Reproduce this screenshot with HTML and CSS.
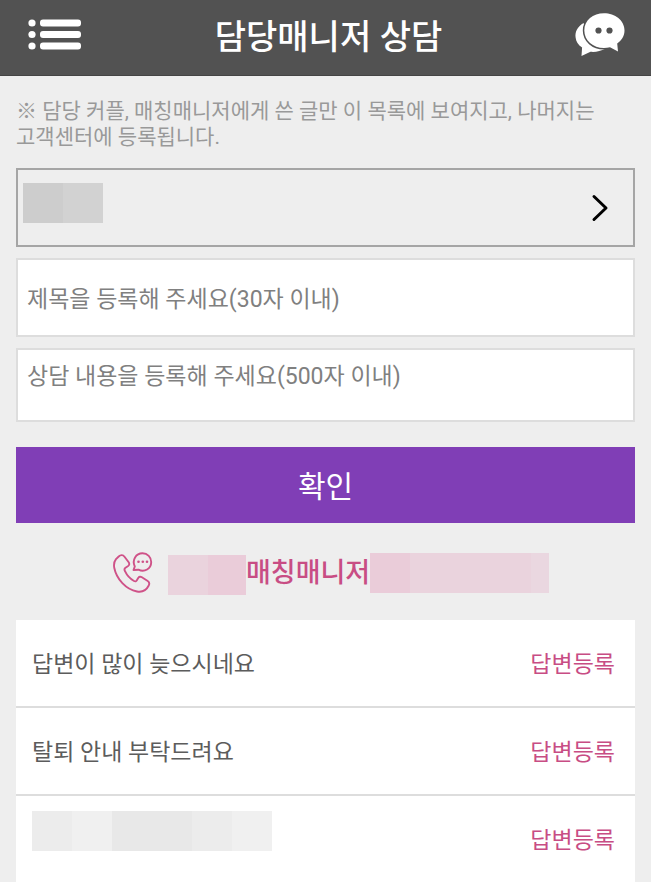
FILE: index.html
```html
<!DOCTYPE html>
<html lang="ko">
<head>
    <meta charset="UTF-8">
    <meta name="viewport" content="width=device-width, initial-scale=1.0">
    <title>담당매니저 상담</title>
    <link rel="stylesheet" href="styles.css">
</head>
<body>
    <header class="header">
        <button type="button" class="icon-button" aria-label="메뉴">
            <svg width="54" height="32" viewBox="0 0 54 32" fill="#fff">
                <circle cx="4" cy="4" r="3.6"/>
                <circle cx="4" cy="15.500" r="3.6"/>
                <circle cx="4" cy="27" r="3.6"/>
                <rect x="12" y="0.500" width="41" height="7" rx="3"/>
                <rect x="12" y="12" width="41" height="7" rx="3"/>
                <rect x="12" y="23.500" width="41" height="7" rx="3"/>
            </svg>
        </button>
        <h1 class="title">담당매니저 상담</h1>
        <button type="button" class="icon-button" aria-label="대화">
            <svg width="50" height="44" viewBox="0 0 50 44">
                <path fill="#fff" d="M8.500 10C2 14 0 19 .6 24.500c.5 4 2.400 7.500 6.500 10L6.500 43l9-4.200c5 .5 10-.5 15-3L20 34z"/>
                <path fill="#fff" stroke="#525252" stroke-width="3" paint-order="stroke" d="M29 .3C18 .3 9.300 7.500 9.300 17.500S18 35 29 35c2 0 4-.3 6-.8l8 4.300-.8-8C46.500 27.500 49.500 23 49.500 17.500 49.500 7.500 40 .3 29 .3z"/>
                <circle cx="23.500" cy="17.500" r="3.100" fill="#525252"/>
                <circle cx="34.500" cy="17.500" r="3.100" fill="#525252"/>
            </svg>
        </button>
    </header>

    <main class="content">
        <p class="notice">※ 담당 커플, 매칭매니저에게 쓴 글만 이 목록에 보여지고, 나머지는 고객센터에 등록됩니다.</p>

        <form class="form">
            <button type="button" class="picker" aria-label="담당자 선택">
                <span class="mask">
                    <span class="block gray-1"></span>
                    <span class="block gray-2"></span>
                </span>
                <svg width="18" height="28" viewBox="0 0 18 28" fill="none" stroke="#000" stroke-width="3" stroke-linecap="round" stroke-linejoin="round">
                    <path d="M3 2.500l12 11.500L3 25.500"/>
                </svg>
            </button>
            <input type="text" class="field" maxlength="30" aria-label="제목" placeholder="제목을 등록해 주세요(30자 이내)">
            <textarea class="field message" maxlength="500" aria-label="상담 내용" placeholder="상담 내용을 등록해 주세요(500자 이내)"></textarea>
            <button type="submit" class="submit">확인</button>
        </form>

        <div class="manager">
            <svg class="phone" width="40" height="42" viewBox="0 0 40 42" fill="none" stroke="#cf5288" stroke-width="1.900" stroke-linecap="round" stroke-linejoin="round">
                <path d="M3 7.200l2.700-2.700c2-2 4.300-1.800 5.800.2l4 5.300c1.200 1.700 1 3-.7 4.200l-2.300 1.500c-1.200.8-1.300 2-.5 3.500 2 4.300 5 7.600 9 9.800 1.300.7 2.300.4 3-.9l1.200-2c.9-1.500 2.200-1.700 3.700-.8l5.800 3.700c1.800 1.200 2 2.800.9 4.800-2.300 4.500-6.600 6.600-11.600 5.700C13 37.500 3.500 27 1.300 16 .6 12.500 1.200 9.500 3 7.200z"/>
                <path d="M21.800 14.500C18.700 7.800 23 1.300 29.500 1.300c5 0 8.700 3.800 8.700 8.700 0 6.800-6.700 10.700-12.700 7.700l-5 .3z"/>
                <g fill="#cf5288" stroke="none">
                    <circle cx="25.500" cy="9.800" r="1.300"/>
                    <circle cx="29.800" cy="9.800" r="1.300"/>
                    <circle cx="34" cy="9.800" r="1.300"/>
                </g>
            </svg>
            <span class="mask low">
                <span class="block pink-2"></span>
                <span class="block narrow pink-1"></span>
            </span>
            <span class="manager-name">매칭매니저</span>
            <span class="mask">
                <span class="block pink-1"></span>
                <span class="block wide pink-2"></span>
                <span class="block short pink-3"></span>
            </span>
        </div>

        <ul class="list">
            <li class="item">
                <span>답변이 많이 늦으시네요</span>
                <span class="status">답변등록</span>
            </li>
            <li class="item">
                <span>탈퇴 안내 부탁드려요</span>
                <span class="status">답변등록</span>
            </li>
            <li class="item">
                <span class="mask">
                    <span class="block gray-4"></span>
                    <span class="block gray-5"></span>
                    <span class="block gray-3"></span>
                    <span class="block gray-3"></span>
                    <span class="block gray-4"></span>
                    <span class="block gray-5"></span>
                </span>
                <span class="status">답변등록</span>
            </li>
        </ul>
    </main>
</body>
</html>
```
FILE: styles.css
```css
* {
    box-sizing: border-box;
}

body {
    margin: 0;
    background-color: #eee;
    color: #5c5c5c;
    font-family: Roboto, "Noto Sans CJK KR", sans-serif;
    font-size: 23px;
}

button {
    font-family: inherit;
    cursor: pointer;
}

/* Header */
.header {
    display: flex;
    justify-content: space-between;
    align-items: center;
    height: 76px;
    padding: 0 26px 6px 28px;
    background-color: #525252;
    border-bottom: 1px solid #444;
}

.icon-button {
    display: flex;
    padding: 0;
    border: 0;
    background: none;
}

.title {
    margin: 4px 0 0;
    color: #fff;
    font-size: 34px;
    font-weight: 500;
    line-height: 48px;
}

/* Content */
.content {
    padding: 22px 16px 0;
}

.notice {
    margin: 0 0 18px;
    color: #999;
    font-size: 21px;
    line-height: 26px;
    word-break: keep-all;
}

.form {
    display: flex;
    flex-direction: column;
    gap: 11px;
}

.picker {
    display: flex;
    justify-content: space-between;
    align-items: center;
    height: 79px;
    padding: 0 24px 10px 5px;
    background: none;
    border: 2px solid #a5a5a5;
}

.picker svg {
    margin-top: 10px;
}

.field {
    width: 100%;
    height: 79px;
    padding: 3px 9px 0;
    background-color: #fff;
    border: 2px solid #ddd;
    border-radius: 0;
    font-family: inherit;
    font-size: 23px;
    line-height: 32px;
}

.field::placeholder {
    color: #808080;
}

.message {
    height: 74px;
    padding-top: 11px;
    resize: none;
}

.submit {
    height: 76px;
    margin-top: 14px;
    padding: 0 0 3px;
    background-color: #803eb6;
    border: 0;
    color: #fff;
    font-size: 30px;
}

/* Manager contact */
.manager {
    display: flex;
    align-items: center;
    height: 97px;
    padding: 2px 0 0 97px;
}

.phone {
    flex: none;
    margin-right: 15px;
}

.manager-name {
    color: #c84d84;
    font-size: 27px;
    font-weight: 500;
    line-height: 40px;
    white-space: nowrap;
}

/* Masked names */
.mask {
    display: flex;
}

.low {
    margin-top: 4px;
}

.block {
    width: 40px;
    height: 40px;
}

.narrow {
    width: 38px;
}

.wide {
    width: 121px;
}

.short {
    width: 18px;
}

.gray-1 { background-color: #cdcdcd; }
.gray-2 { background-color: #d2d2d2; }
.gray-3 { background-color: #e8e8e8; }
.gray-4 { background-color: #ececec; }
.gray-5 { background-color: #f0f0f0; }
.pink-1 { background-color: #eaccd9; }
.pink-2 { background-color: #ead3dd; }
.pink-3 { background-color: #ead7e0; }

/* Question list */
.list {
    margin: 0;
    padding: 0;
    background-color: #fff;
    list-style: none;
}

.item {
    display: flex;
    justify-content: space-between;
    align-items: center;
    height: 88px;
    padding: 0 20px 2px 16px;
    border-bottom: 2px solid #ddd;
}

.item .mask {
    margin-bottom: 14px;
}

.item:last-child {
    height: 86px;
    border-bottom: 0;
}

.status {
    color: #c84d84;
}
```
